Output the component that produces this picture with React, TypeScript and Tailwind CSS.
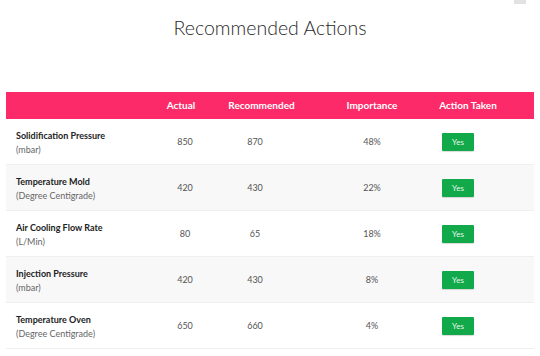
import React from "react";

const rows = [
  { name: "Solidification Pressure", unit: "(mbar)", actual: "850", rec: "870", imp: "48%" },
  { name: "Temperature Mold", unit: "(Degree Centigrade)", actual: "420", rec: "430", imp: "22%" },
  { name: "Air Cooling Flow Rate", unit: "(L/Min)", actual: "80", rec: "65", imp: "18%" },
  { name: "Injection Pressure", unit: "(mbar)", actual: "420", rec: "430", imp: "8%" },
  { name: "Temperature Oven", unit: "(Degree Centigrade)", actual: "650", rec: "660", imp: "4%" },
];

export default function App() {
  return (
    <div className="relative w-[540px] h-[356px] overflow-hidden bg-white font-['Lato',sans-serif]">
      <div className="absolute left-[514px] top-0 w-[12px] h-[4px] bg-[#e2e2e2]" />
      <h1 className="pt-[14px] text-center text-[19.5px] leading-[28px] font-light text-[#2a2a2a]">
        Recommended Actions
      </h1>
      <div className="mx-[6px] mt-[50px]">
        <div className="grid h-[27px] grid-cols-[146px_58px_103px_118px_74px_1fr] items-center bg-[#fd2a69] text-[10px] font-bold text-white">
          <div />
          <div className="text-center">Actual</div>
          <div className="text-center">Recommended</div>
          <div className="text-center">Importance</div>
          <div className="text-center">Action Taken</div>
          <div />
        </div>
        {rows.map((r, i) => (
          <div
            key={r.name}
            className={`grid h-[46px] grid-cols-[146px_58px_103px_118px_74px_1fr] items-center border-b border-[#efefef] text-[9px] ${
              i % 2 === 1 ? "bg-[#f8f8f8]" : "bg-white"
            }`}
          >
            <div className="pl-[10px] pt-[3px] leading-[14px]">
              <div className="font-bold text-[#222]">{r.name}</div>
              <div className="text-[#666]">{r.unit}</div>
            </div>
            <div className="pl-[8px] pt-[1px] text-center text-[#555]">{r.actual}</div>
            <div className="pr-[13px] pt-[1px] text-center text-[#555]">{r.rec}</div>
            <div className="pt-[1px] text-center text-[#555]">{r.imp}</div>
            <div className="flex justify-center pr-[20px] pt-[1px]">
              <div className="flex h-[18px] w-[32px] items-center justify-center rounded-[1px] bg-[#12a94b] text-[8px] text-[#e8f8ee] shadow-[0_1px_1px_rgba(0,0,0,0.15)]">
                Yes
              </div>
            </div>
            <div />
          </div>
        ))}
      </div>
    </div>
  );
}
